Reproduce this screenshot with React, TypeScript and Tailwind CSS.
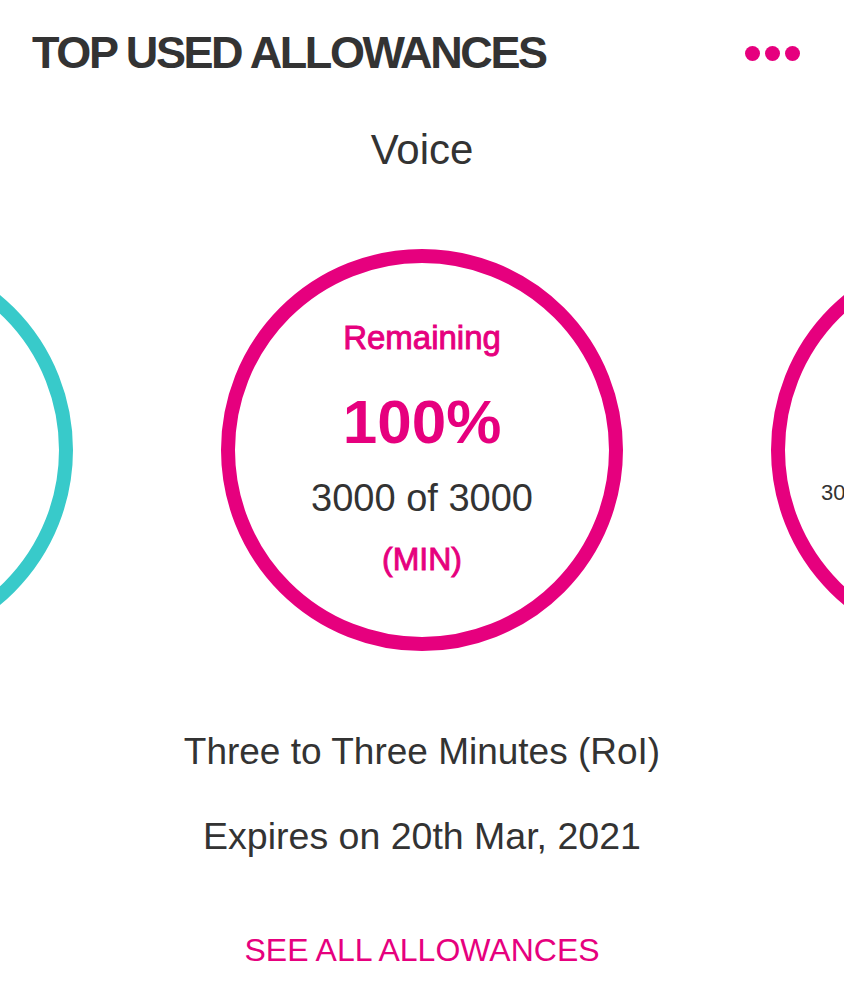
import React from "react";

export default function App() {
  return (
    <div className="w-[844px] h-[999px] bg-white overflow-hidden font-['Liberation_Sans',Arial,sans-serif] text-[#333333]">
      <div className="flex items-center justify-between pt-[30px] pl-[32px] pr-[44px]">
        <h1 className="text-[45px] leading-[46px] font-bold tracking-[-2.4px] whitespace-nowrap">
          TOP USED ALLOWANCES
        </h1>
        <div className="flex items-center gap-[5px]">
          <span className="block w-[15px] h-[15px] rounded-full bg-[#e6007e]" />
          <span className="block w-[15px] h-[15px] rounded-full bg-[#e6007e]" />
          <span className="block w-[15px] h-[15px] rounded-full bg-[#e6007e]" />
        </div>
      </div>

      <div className="mt-[53px] text-center text-[42px] leading-[42px]">Voice</div>

      <div className="mt-[78px] flex justify-center gap-[148px] h-[402px]">
        <div className="shrink-0 w-[402px] h-[402px] rounded-full border-[14px] border-[#38caca]" />
        <div className="shrink-0 w-[402px] h-[402px] rounded-full border-[14px] border-[#e6007e] flex flex-col items-center pt-[59px]">
          <div className="text-[33px] leading-[32px] text-[#e6007e] [-webkit-text-stroke:0.9px_#e6007e]">Remaining</div>
          <div className="mt-[37px] text-[62px] leading-[62px] font-bold text-[#e6007e]">100%</div>
          <div className="mt-[27px] text-[38px] leading-[37px]">3000 of 3000</div>
          <div className="mt-[26px] text-[32px] leading-[32px] text-[#e6007e] [-webkit-text-stroke:0.9px_#e6007e]">(MIN)</div>
        </div>
        <div className="shrink-0 w-[402px] h-[402px] rounded-full border-[14px] border-[#e6007e] flex flex-col pt-[219px] pl-[36px]">
          <div className="text-[22px] leading-[22px] whitespace-nowrap">3000 of 3000</div>
        </div>
      </div>

      <div className="mt-[82px] text-center text-[37px] leading-[37px]">Three to Three Minutes (RoI)</div>
      <div className="mt-[48px] text-center text-[37.5px] leading-[37px]">Expires on 20th Mar, 2021</div>
      <div className="mt-[79px] text-center text-[32px] leading-[32px] text-[#e6007e]">SEE ALL ALLOWANCES</div>
    </div>
  );
}
